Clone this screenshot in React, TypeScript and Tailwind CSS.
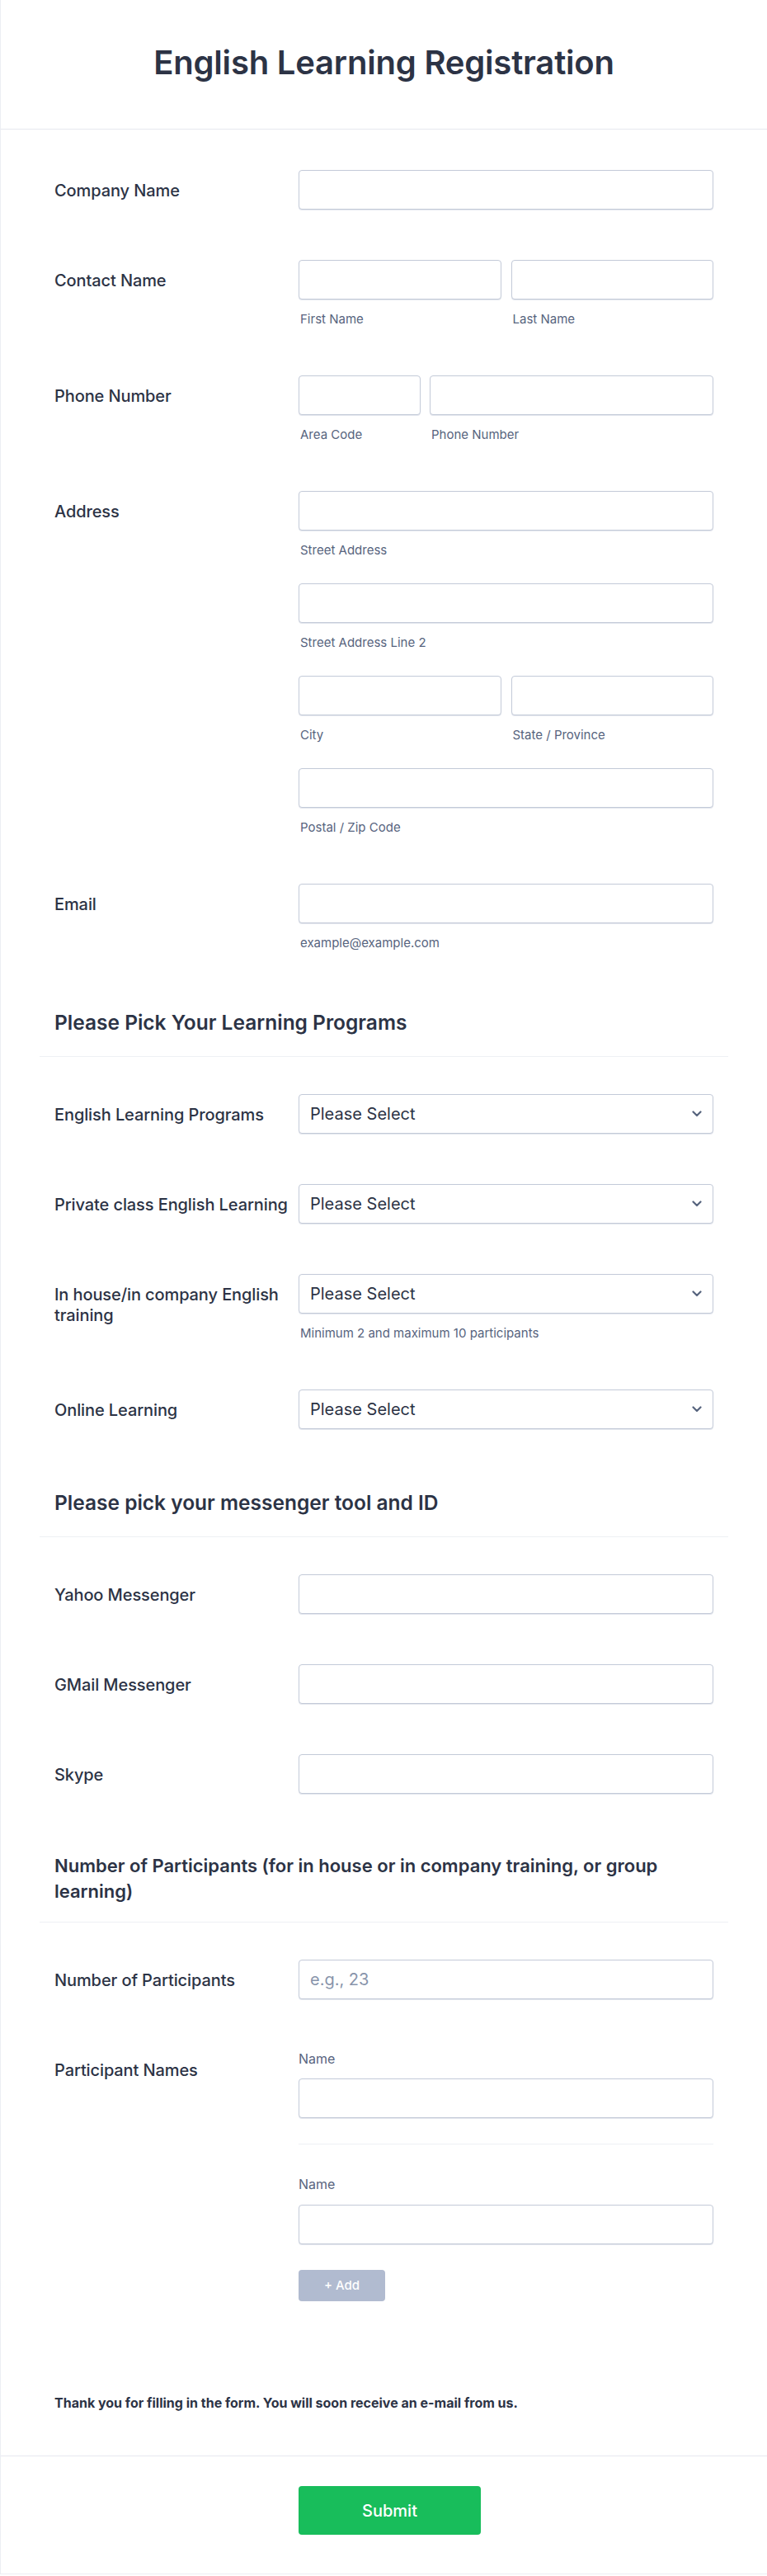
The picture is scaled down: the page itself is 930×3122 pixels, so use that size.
import type { ReactNode } from "react";

const inputClassName =
  "h-12 w-full rounded-[4px] border border-[#c3cad8] bg-white px-[13px] text-[20px] font-normal text-[#2c3345] shadow-[0_1px_0_#e4e7ee] outline-none placeholder:text-[#8894ab]";

const sublabelClassName =
  "mt-[15px] pl-[2px] text-[15px] leading-[18px] text-[#57647e]";

type RowProps = {
  label: string;
  children: ReactNode;
  withSublabel?: boolean;
};

function Row({ label, children, withSublabel }: RowProps) {
  return (
    <div
      className={`grid grid-cols-[296px_1fr] px-[18px] pt-[30px] ${
        withSublabel ? "pb-[29px]" : "pb-[31px]"
      }`}
    >
      <label className="pt-[13px] text-[20px] font-medium leading-[25px] tracking-[-0.1px] text-[#2c3345]">
        {label}
      </label>
      <div>{children}</div>
    </div>
  );
}

function Sub({ children }: { children: ReactNode }) {
  return <div className={sublabelClassName}>{children}</div>;
}

function Select() {
  return (
    <div className="relative">
      <select
        className={`${inputClassName} appearance-none pr-10`}
        defaultValue=""
      >
        <option value="">Please Select</option>
      </select>
      <svg
        className="pointer-events-none absolute right-[14px] top-1/2 -translate-y-1/2"
        width="12"
        height="8"
        viewBox="0 0 12 8"
        fill="none"
      >
        <path
          d="M1.5 1.5 6 6l4.5-4.5"
          stroke="#57647e"
          strokeWidth="2.2"
          strokeLinecap="round"
          strokeLinejoin="round"
        />
      </svg>
    </div>
  );
}

function Heading({ children, small }: { children: ReactNode; small?: boolean }) {
  return (
    <div
      className={`mb-[15px] border-b border-[#eef0f4] px-[18px] ${
        small ? "pb-[21px] pt-[41px]" : "pb-[25px] pt-[42px]"
      }`}
    >
      <h2
        className={`font-semibold text-[#2c3345] ${
          small ? "text-[22px] leading-[31px]" : "text-[24.5px] leading-[32px]"
        }`}
      >
        {children}
      </h2>
    </div>
  );
}

export default function App() {
  return (
    <div className="min-h-screen bg-white font-['Inter','Liberation_Sans',sans-serif] text-[#2c3345]">
      <div className="border-b border-l border-[#eceef3] bg-white">
        <header className="flex h-[157px] items-center justify-center border-b border-[#e6e8ef] pb-[5px]">
          <h1 className="text-[40px] font-semibold leading-none tracking-[-0.2px] text-[#2c3345]">
            English Learning Registration
          </h1>
        </header>

        <div className="px-[47px] pt-[19px]">
          <Row label="Company Name">
            <input className={inputClassName} />
          </Row>

          <Row label="Contact Name" withSublabel>
            <div className="grid grid-cols-2 gap-3">
              <div>
                <input className={inputClassName} />
                <Sub>First Name</Sub>
              </div>
              <div>
                <input className={inputClassName} />
                <Sub>Last Name</Sub>
              </div>
            </div>
          </Row>

          <Row label="Phone Number" withSublabel>
            <div className="flex gap-[11px]">
              <div className="w-[148px]">
                <input className={inputClassName} />
                <Sub>Area Code</Sub>
              </div>
              <div className="flex-1">
                <input className={inputClassName} />
                <Sub>Phone Number</Sub>
              </div>
            </div>
          </Row>

          <Row label="Address" withSublabel>
            <div className="flex flex-col gap-[31px]">
              <div>
                <input className={inputClassName} />
                <Sub>Street Address</Sub>
              </div>
              <div>
                <input className={inputClassName} />
                <Sub>Street Address Line 2</Sub>
              </div>
              <div className="grid grid-cols-2 gap-3">
                <div>
                  <input className={inputClassName} />
                  <Sub>City</Sub>
                </div>
                <div>
                  <input className={inputClassName} />
                  <Sub>State / Province</Sub>
                </div>
              </div>
              <div>
                <input className={inputClassName} />
                <Sub>Postal / Zip Code</Sub>
              </div>
            </div>
          </Row>

          <Row label="Email" withSublabel>
            <input className={inputClassName} />
            <Sub>example@example.com</Sub>
          </Row>

          <Heading>Please Pick Your Learning Programs</Heading>

          <Row label="English Learning Programs">
            <Select />
          </Row>
          <Row label="Private class English Learning">
            <Select />
          </Row>
          <Row label="In house/in company English training" withSublabel>
            <Select />
            <Sub>Minimum 2 and maximum 10 participants</Sub>
          </Row>
          <Row label="Online Learning">
            <Select />
          </Row>

          <Heading>Please pick your messenger tool and ID</Heading>

          <Row label="Yahoo Messenger">
            <input className={inputClassName} />
          </Row>
          <Row label="GMail Messenger">
            <input className={inputClassName} />
          </Row>
          <Row label="Skype">
            <input className={inputClassName} />
          </Row>

          <Heading small>
            Number of Participants (for in house or in company training, or group
            learning)
          </Heading>

          <Row label="Number of Participants">
            <input className={inputClassName} placeholder="e.g., 23" />
          </Row>

          <Row label="Participant Names">
            <div>
              <div className="text-[16px] leading-[22px] text-[#57647e]">Name</div>
              <input className={`${inputClassName} mt-[13px]`} />
              <div className="mt-[31px] border-t border-[#eef0f4]" />
              <div className="mt-[37px] text-[16px] leading-[22px] text-[#57647e]">
                Name
              </div>
              <input className={`${inputClassName} mt-[14px]`} />
              <button
                type="button"
                className="mt-[31px] h-[38px] w-[105px] rounded-[4px] bg-[#b1bbd0] text-[15px] font-medium text-white"
              >
                + Add
              </button>
            </div>
          </Row>

          <div className="px-[18px] pb-[52px] pt-[80px]">
            <p className="text-[16px] font-bold leading-[24px] text-[#2c3345]">
              Thank you for filling in the form. You will soon receive an e-mail from us.
            </p>
          </div>
        </div>

        <div className="border-t border-[#e6e8ef] px-[47px] pb-[47px] pt-[36px]">
          <div className="grid grid-cols-[296px_1fr] px-[18px]">
            <div />
            <div>
              <button
                type="button"
                className="h-[59px] w-[221px] rounded-[4px] bg-[#18bd5b] text-[20px] font-medium text-white"
              >
                Submit
              </button>
            </div>
          </div>
        </div>
      </div>
    </div>
  );
}
